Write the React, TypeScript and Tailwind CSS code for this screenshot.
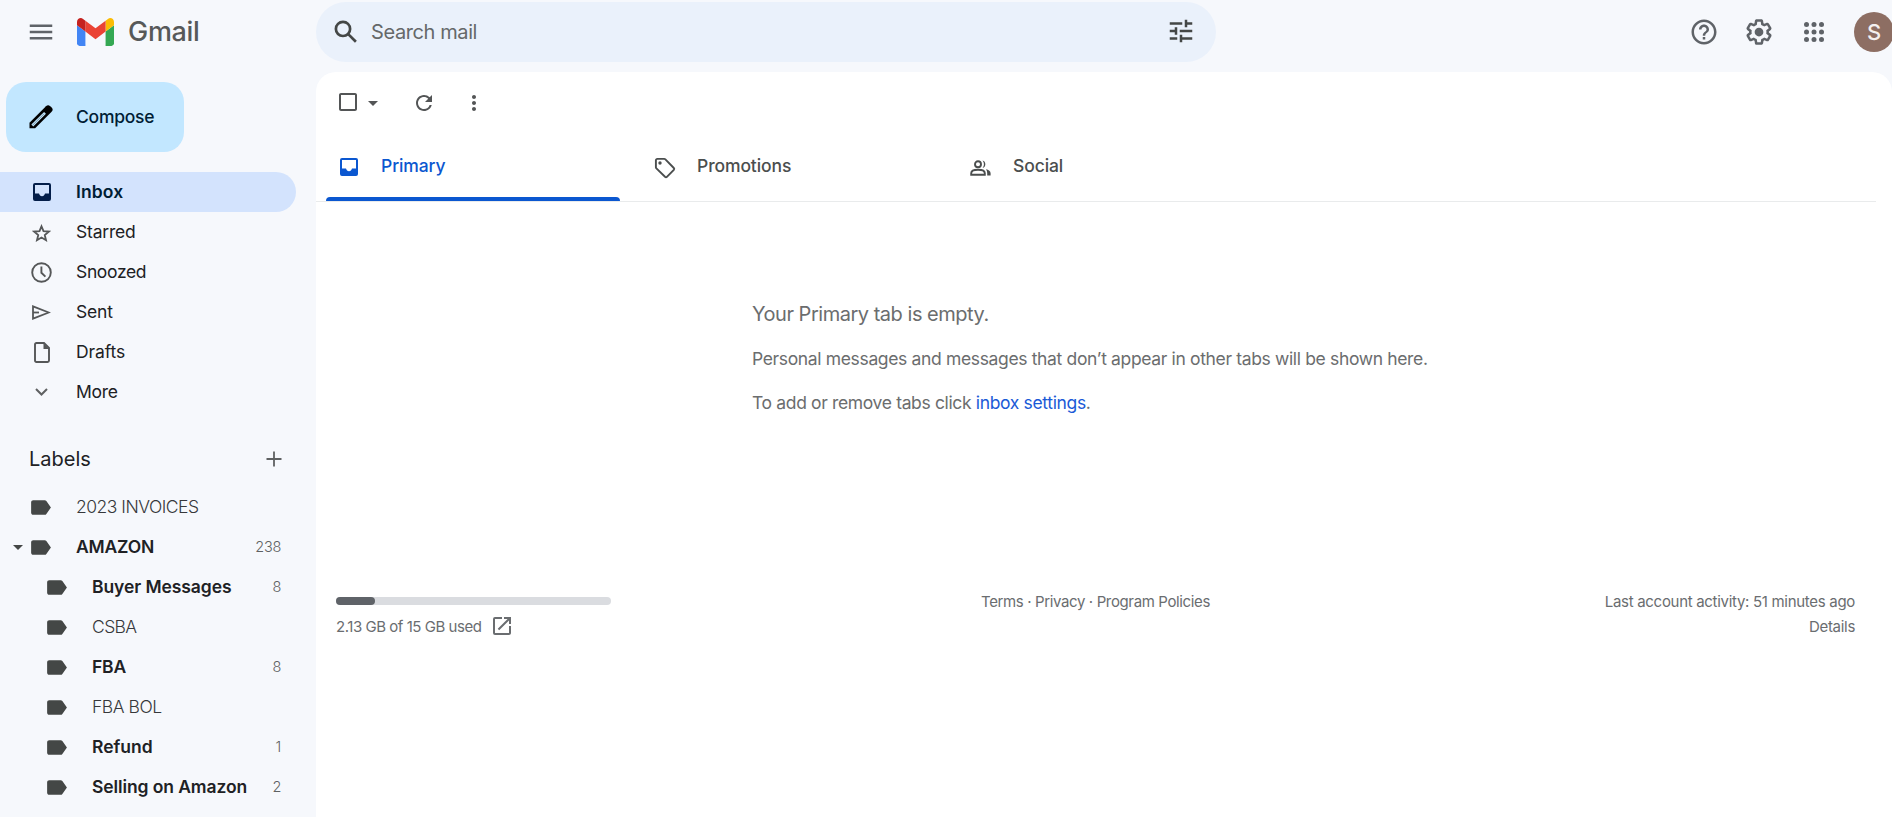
import type { ReactNode } from "react";
import {
  MdArrowDropDown,
  MdCheckBoxOutlineBlank,
  MdHelpOutline,
  MdLabel,
  MdMenu,
  MdMoreVert,
  MdOpenInNew,
  MdRefresh,
  MdTune,
} from "react-icons/md";

const folders = [
  { name: "Inbox", icon: <InboxIcon />, active: true, track: "tracking-[0.1px]" },
  { name: "Starred", icon: <StarIcon />, track: "tracking-[-0.2px]" },
  { name: "Snoozed", icon: <ClockIcon />, track: "tracking-[-0.35px]" },
  { name: "Sent", icon: <SendIcon />, track: "tracking-[-0.2px]" },
  { name: "Drafts", icon: <DraftIcon />, track: "tracking-[-0.1px]" },
  { name: "More", icon: <ChevronIcon />, track: "tracking-[-0.3px]" },
];

const labels = [
  { name: "2023 INVOICES", track: "tracking-[-0.5px]" },
  { name: "AMAZON", count: 238, bold: true, open: true, track: "tracking-[-0.2px]" },
  { name: "Buyer Messages", count: 8, bold: true, child: true, track: "tracking-[-0.08px]" },
  { name: "CSBA", child: true, track: "tracking-[-0.6px]" },
  { name: "FBA", count: 8, bold: true, child: true, track: "tracking-[-0.2px]" },
  { name: "FBA BOL", child: true, track: "tracking-[-0.45px]" },
  { name: "Refund", count: 1, bold: true, child: true, track: "tracking-[0px]" },
  { name: "Selling on Amazon", count: 2, bold: true, child: true, track: "tracking-[-0.1px]" },
];

const tabs = [
  { name: "Primary", icon: <InboxIcon />, active: true, track: "tracking-[-0.1px]" },
  { name: "Promotions", icon: <OfferIcon />, track: "tracking-[-0.1px]" },
  { name: "Social", icon: <PeopleIcon />, track: "tracking-[-0.1px]" },
];

function GmailLogo() {
  return (
    <svg width="37" height="28" viewBox="52 42 88 66">
      <path fill="#4285f4" d="M58 108h14V74L52 59v43c0 3.32 2.69 6 6 6" />
      <path fill="#34a853" d="M120 108h14c3.32 0 6-2.69 6-6V59l-20 15" />
      <path fill="#fbbc04" d="M120 48v26l20-15v-8c0-7.42-8.47-11.65-14.4-7.2" />
      <path fill="#ea4335" d="M72 74V48l24 18 24-18v26L96 92" />
      <path fill="#c5221f" d="M52 51v8l20 15V48l-5.6-4.2c-5.94-4.45-14.4-.22-14.4 7.2" />
    </svg>
  );
}

function PencilIcon() {
  return (
    <svg width="24" height="24" viewBox="0 0 24 24">
      <path fill="#000" d="M.5 23.300v-5.600L17 1.200a3 3 0 0 1 4.200 0l1.400 1.400a3 3 0 0 1 0 4.200L6.100 23.300z" />
      <path stroke="#c2e7ff" strokeWidth="2.600" d="M3.300 20.500 16 7.800" />
      <path stroke="#5f7683" strokeWidth=".7" d="M3.300 20.500 15 8.800" />
    </svg>
  );
}

function SearchIcon() {
  return (
    <svg width="30" height="30" viewBox="0 0 30 30" fill="none" stroke="currentColor" strokeWidth="2.700">
      <circle cx="12" cy="11.900" r="7.100" />
      <path d="m17.200 17.100 7.700 7.700" />
    </svg>
  );
}

function InboxIcon() {
  return (
    <svg width="18" height="18" viewBox="0 0 18 18">
      <path
        fill="currentColor"
        fillRule="evenodd"
        d="M2 0h14a2 2 0 0 1 2 2v14a2 2 0 0 1-2 2H2a2 2 0 0 1-2-2V2a2 2 0 0 1 2-2m0 2v8.500h4c.4 1.600 1.500 2.700 3 2.700s2.600-1.100 3-2.700h4V2z"
      />
    </svg>
  );
}

function StarIcon() {
  return (
    <svg width="19" height="19" viewBox="0 0 19 19" className="mt-0.5">
      <path
        d="m9.500 2.300 2 4.900 5.300.4-4.050 3.450 1.250 5.150-4.500-2.750L5 16.200l1.250-5.150L2.200 7.600l5.300-.4z"
        fill="none"
        stroke="currentColor"
        strokeWidth="1.800"
      />
    </svg>
  );
}

function ClockIcon() {
  return (
    <svg width="21" height="21" viewBox="0 0 21 21" fill="none" stroke="currentColor" strokeWidth="1.900">
      <circle cx="10.500" cy="10.500" r="9.300" />
      <path d="M10.400 4.500v6.300l4 3.800" />
    </svg>
  );
}

function SendIcon() {
  return (
    <svg width="19" height="15" viewBox="0 0 19 15" fill="none" stroke="currentColor" strokeWidth="1.800">
      <path d="M1 1.300v12.400l15.800-6.200z" />
      <path d="M1 7.500h6" />
    </svg>
  );
}

function DraftIcon() {
  return (
    <svg width="16" height="21" viewBox="0 0 16 21">
      <path
        d="M1 2.400C1 1.600 1.600 1 2.400 1H10l5 5v12.600c0 .8-.6 1.400-1.400 1.400H2.400C1.600 20 1 19.400 1 18.600z"
        fill="none"
        stroke="currentColor"
        strokeWidth="1.900"
      />
      <path d="M9.500 1v6H15z" fill="currentColor" />
    </svg>
  );
}

function ChevronIcon() {
  return (
    <svg width="13" height="8" viewBox="0 0 13 8" fill="none" stroke="#5f6162" strokeWidth="2">
      <path d="m1 1 5.500 5.500L12 1" />
    </svg>
  );
}

function OfferIcon() {
  return (
    <svg width="22" height="22" viewBox="0 0 22 22">
      <path
        d="M1.900 3.300c0-.8.6-1.400 1.400-1.400h6.900c.5 0 .9.200 1.200.5l8.400 8.600c.5.500.5 1.300 0 1.900l-6.900 6.900c-.5.500-1.300.5-1.900 0L2.400 11.400c-.3-.3-.5-.7-.5-1.200z"
        fill="none"
        stroke="currentColor"
        strokeWidth="1.900"
      />
      <circle cx="6" cy="6" r="1.700" fill="currentColor" />
    </svg>
  );
}

function PeopleIcon() {
  return (
    <svg width="21" height="16" viewBox="0 0 21 16" fill="none" stroke="currentColor" strokeWidth="1.900">
      <circle cx="8" cy="4.200" r="3" />
      <path d="M1.200 14.700v-1.500c0-2.300 3.500-3.400 6.800-3.400s6.800 1.100 6.800 3.400v1.500z" />
      <path fill="currentColor" stroke="none" d="M12.500.5a3.900 3.900 0 0 1 0 7.500c.9-1 1.400-2.300 1.400-3.750S13.400 1.500 12.500.5M16 9.300c2.700.6 4.600 1.800 4.600 3.900v2.400h-3.400v-2.400c0-1.600-.4-2.900-1.200-3.900" />
    </svg>
  );
}

function SettingsIcon() {
  return (
    <svg width="30" height="30" viewBox="0 0 24 24" fill="currentColor">
      <path d="M13.850 22.250h-3.700c-.740 0-1.360-.540-1.450-1.270l-.270-1.890c-.270-.140-.530-.290-.790-.460l-1.800.720c-.7.260-1.470-.030-1.810-.650L2.200 15.530c-.350-.660-.2-1.440.360-1.880l1.530-1.190c-.010-.150-.020-.3-.020-.460 0-.150.010-.310.020-.460l-1.520-1.190c-.590-.450-.740-1.260-.370-1.880l1.850-3.190c.340-.620 1.110-.9 1.790-.630l1.810.730c.260-.170.520-.320.780-.460l.270-1.910c.090-.7.710-1.250 1.440-1.250h3.700c.740 0 1.360.540 1.450 1.270l.270 1.890c.270.140.530.290.790.460l1.800-.720c.710-.260 1.480.030 1.820.650l1.840 3.180c.360.660.2 1.440-.360 1.880l-1.520 1.190c.010.150.020.3.020.460s-.010.310-.020.460l1.520 1.190c.560.450.720 1.230.370 1.860l-1.860 3.220c-.340.620-1.110.9-1.800.630l-1.800-.720c-.260.170-.520.320-.780.460l-.270 1.910c-.1.680-.720 1.220-1.460 1.220zm-3.230-2h2.760l.370-2.550.530-.220c.440-.180.880-.440 1.340-.780l.450-.340 2.380.960 1.380-2.400-2.030-1.580.070-.560c.030-.260.060-.510.060-.780s-.030-.530-.060-.780l-.070-.560 2.030-1.580-1.390-2.400-2.390.960-.450-.350c-.420-.320-.870-.580-1.330-.770l-.520-.220-.370-2.550h-2.760l-.370 2.550-.530.210c-.440.190-.880.440-1.340.790l-.450.330-2.380-.950-1.390 2.390 2.030 1.580-.070.560a7 7 0 0 0-.060.790c0 .260.020.530.060.780l.070.560-2.030 1.580 1.380 2.400 2.390-.960.450.350c.430.330.860.580 1.330.770l.530.220z" />
      <circle cx="12" cy="12" r="3.500" />
    </svg>
  );
}

function AppsIcon() {
  return (
    <svg width="20" height="20" viewBox="0 0 20 20" fill="currentColor">
      {[2.5, 10, 17.5].map((y) => [2.5, 10, 17.5].map((x) => <circle key={`${x}-${y}`} cx={x} cy={y} r="2.500" />))}
    </svg>
  );
}

function IconBox({ children, className = "" }: { children: ReactNode; className?: string }) {
  return <span className={`flex shrink-0 items-center justify-center ${className}`}>{children}</span>;
}

function Header() {
  return (
    <header className="flex h-[72px] items-start">
      <div className="flex h-16 w-[316px] shrink-0 items-center pl-[26px] text-[#5f6368]">
        <MdMenu size={30} />
        <div className="ml-[21px] flex items-center">
          <GmailLogo />
          <span className="ml-3.5 text-[27px] leading-8 font-[450] tracking-[-0.3px] text-[#575959]">Gmail</span>
        </div>
      </div>
      <div className="mt-0.5 flex h-[60px] w-[900px] shrink-0 items-center rounded-full bg-[#eaf1fb] pr-5 pl-[15px] text-[#444746]">
        <SearchIcon />
        <span className="ml-2.5 flex-1 text-xl tracking-[-0.4px] text-[#656869]">Search mail</span>
        <MdTune size={30} className="-mt-0.5" />
      </div>
      <div className="ml-auto flex h-16 items-center gap-[25px] text-[#5f6368]">
        <MdHelpOutline size={30} />
        <SettingsIcon />
        <IconBox className="w-[30px]">
          <AppsIcon />
        </IconBox>
        <div className="-mr-0.5 flex size-10 items-center justify-center rounded-full bg-[#8d6e63] text-[22px] font-medium text-[#f4f0ef]">
          S
        </div>
      </div>
    </header>
  );
}

function Sidebar() {
  return (
    <aside className="w-[316px] shrink-0 pt-2.5">
      <button className="ml-1.5 flex h-[70px] w-[178px] items-center rounded-[20px] bg-[#c2e7ff] pl-[23px] text-[17.5px] font-medium text-[#001d35]">
        <PencilIcon />
        <span className="ml-[23px] tracking-[-0.25px]">Compose</span>
      </button>

      <nav className="mt-5">
        {folders.map((folder) => (
          <div
            key={folder.name}
            className={`flex h-10 w-[296px] items-center rounded-r-full pl-[26px] text-[17.5px] ${
              folder.active ? "bg-[#d3e3fd] font-semibold text-[#001d35]" : "font-[370] text-[#202124]"
            }`}
          >
            <IconBox className={`mr-[19px] w-[31px] ${folder.active ? "text-[#041e49]" : "text-[#555758]"}`}>{folder.icon}</IconBox>
            <span className={folder.track}>{folder.name}</span>
          </div>
        ))}
      </nav>

      <div className="mt-[27px] flex h-10 w-[289px] items-center justify-between pl-[29px] text-xl text-[#202124]">
        <span className="tracking-[0px]">Labels</span>
        <IconBox className="w-[31px] text-[#5f6162]">
          <svg width="16" height="16" viewBox="0 0 16 16" stroke="currentColor" strokeWidth="1.800">
            <path d="M8 .5v15M.5 8h15" />
          </svg>
        </IconBox>
      </div>

      <div className="mt-2">
        {labels.map((label) => (
          <div key={label.name} className={`flex h-10 w-[281px] items-center ${label.child ? "pl-11" : "pl-2"}`}>
            {!label.child && (
              <IconBox className="w-5 text-[#444746]">
                {label.open && <MdArrowDropDown size={24} className="shrink-0" />}
              </IconBox>
            )}
            <MdLabel size={25} className="shrink-0 text-[#444746]" />
            <span
              className={`ml-[23px] flex-1 text-[17.5px] whitespace-nowrap ${label.track} ${
                label.bold ? "font-semibold text-[#202124]" : "font-[350] text-[#36383b]"
              }`}
            >
              {label.name}
            </span>
            <span className="text-[14.5px] font-[350] tracking-[-0.3px] text-[#5f6162]">{label.count}</span>
          </div>
        ))}
      </div>
    </aside>
  );
}

function Toolbar() {
  return (
    <div className="flex h-[61px] items-center pl-5 text-[#535556]">
      <MdCheckBoxOutlineBlank size={24} className="-mt-0.5" />
      <MdArrowDropDown size={24} className="ml-px" />
      <MdRefresh size={24} className="ml-[27px]" />
      <MdMoreVert size={24} className="ml-[26px]" />
    </div>
  );
}

function Tabs() {
  return (
    <div className="mr-4 flex h-[69px] border-b border-[#e9ebec]">
      {tabs.map((tab) => (
        <div
          key={tab.name}
          className={`flex w-[316px] flex-col pl-2.5 text-[17.5px] font-medium ${tab.active ? "text-[#0b57d0]" : "text-[#4b4e4e]"}`}
        >
          <div className="flex h-[65px] items-center pl-2">
            <IconBox className="mt-1 w-[29px]">{tab.icon}</IconBox>
            <span className={`mt-0.5 ml-[18px] ${tab.track}`}>{tab.name}</span>
          </div>
          {tab.active && <div className="h-1 w-[294px] shrink-0 rounded-t bg-[#0b57d0]" />}
        </div>
      ))}
    </div>
  );
}

function EmptyState() {
  return (
    <div className="mt-[90px] ml-[436px] text-[17.5px] tracking-[-0.35px] text-[#6b6d6e]">
      <p className="h-[45px] text-xl leading-[44px] tracking-[-0.48px]">Your Primary tab is empty.</p>
      <p className="h-11 leading-[44px]">
        Personal messages and messages that don’t appear in other tabs will be shown here.
      </p>
      <p className="h-11 leading-[44px]">
        To add or remove tabs click <a className="text-[#1a5ad7]">inbox settings</a>.
      </p>
    </div>
  );
}

function Footer() {
  return (
    <footer className="mt-[164px] grid grid-cols-[275px_1fr_275px] pr-[37px] pl-5 text-[15px] leading-[25px] text-[#6a6d70]">
      <div>
        <div className="mt-2 h-2 rounded-full bg-[#dadce0]">
          <div className="h-2 w-[39px] rounded-full bg-[#5f6368]" />
        </div>
        <div className="mt-2 flex h-[26px] items-center">
          <span className="tracking-[-0.46px]">2.13 GB of 15 GB used</span>
          <MdOpenInNew size={24} className="ml-[9px]" />
        </div>
      </div>
      <div className="text-center tracking-[-0.37px]">Terms · Privacy · Program Policies</div>
      <div className="text-right tracking-[-0.3px]">
        Last account activity: 51 minutes ago
        <br />
        Details
      </div>
    </footer>
  );
}

export default function App() {
  return (
    <div className="h-[817px] w-full overflow-hidden bg-[#f6f8fc] font-['Inter',sans-serif]">
      <Header />
      <div className="flex h-[745px]">
        <Sidebar />
        <main className="min-w-0 flex-1 rounded-t-[20px] bg-white">
          <Toolbar />
          <Tabs />
          <EmptyState />
          <Footer />
        </main>
      </div>
    </div>
  );
}
